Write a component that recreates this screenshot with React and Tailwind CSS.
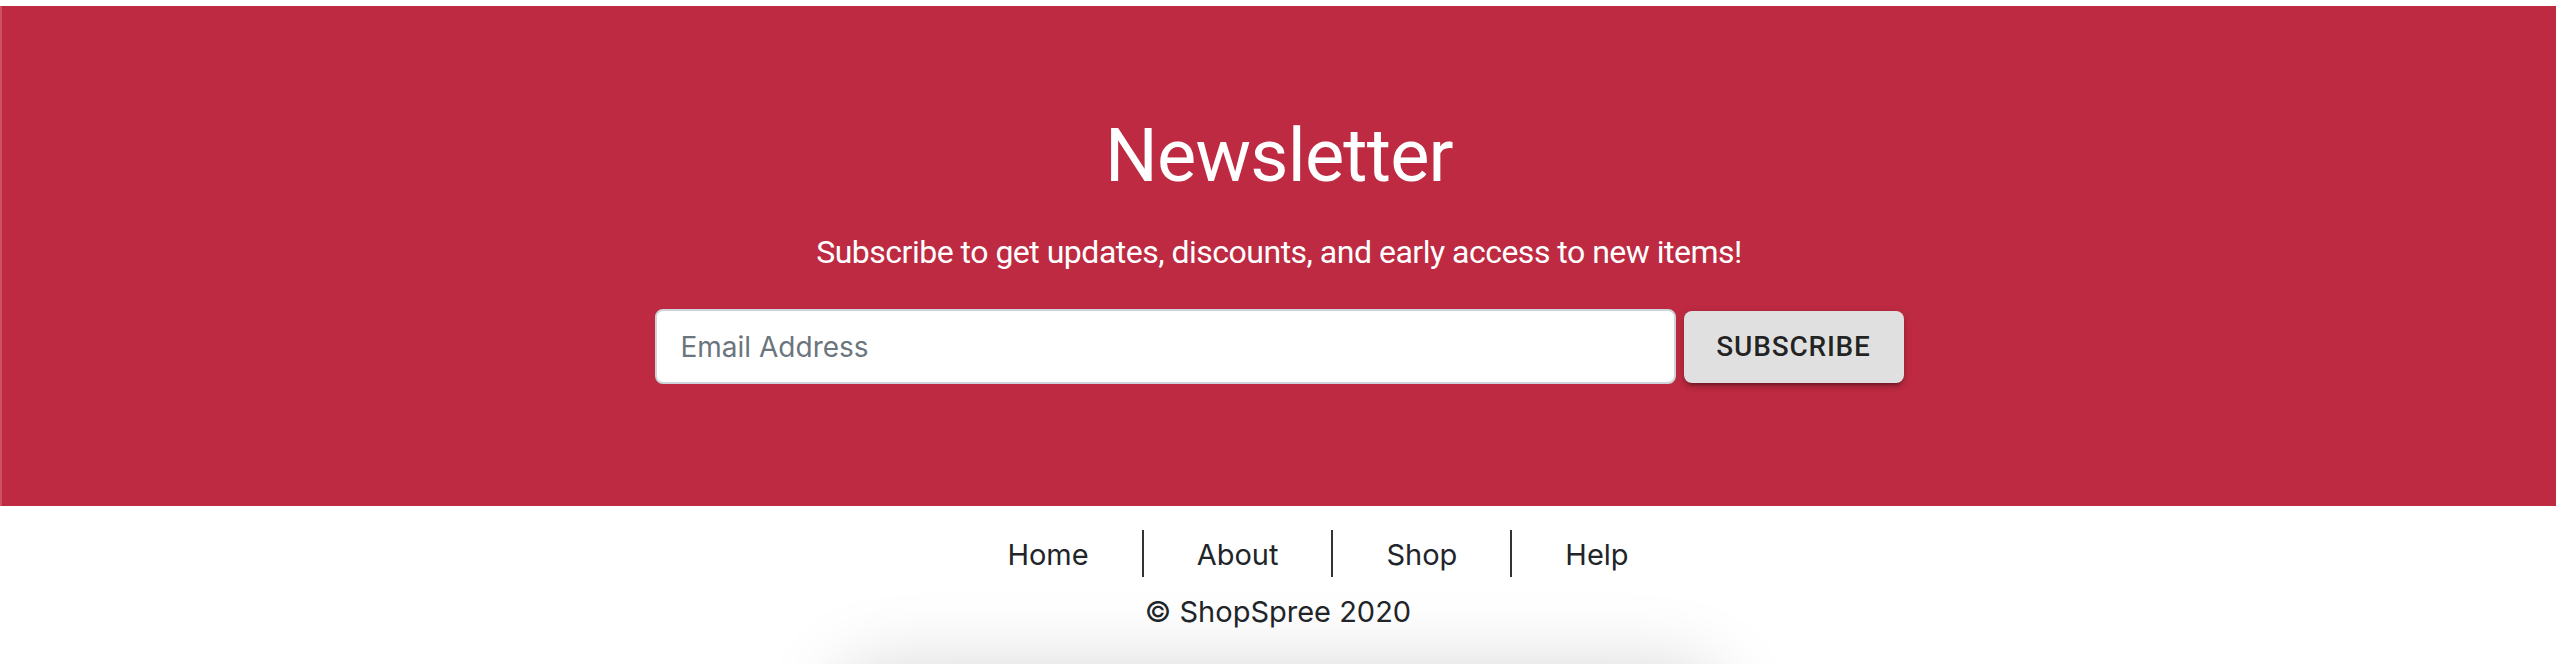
import { useState } from "react";

// Newsletter signup band with the footer nav underneath.
const links = ["Home", "About", "Shop", "Help"];

function Newsletter() {
  const [email, setEmail] = useState("");
  return (
    <section className="flex h-[500px] flex-col items-center border-l-2 border-[#cc5166] bg-[#bd2a41] font-['Roboto',sans-serif] text-white">
      <h2 className="mt-[113px] text-[74px] font-normal leading-none tracking-[-0.8px]">Newsletter</h2>
      <p className="mt-[43px] text-[32px] leading-none tracking-[-0.5px]">
        Subscribe to get updates, discounts, and early access to new items!
      </p>
      <form className="mt-[41px] flex items-center gap-2" onSubmit={(e) => e.preventDefault()}>
        <input
          type="email"
          value={email}
          onChange={(e) => setEmail(e.target.value)}
          placeholder="Email Address"
          className="h-[75px] w-[1021px] rounded-lg border-2 border-[#ced4da] bg-white px-[24px] font-['Inter',sans-serif] text-[28px] text-[#495057] outline-none placeholder:text-[#6c757d]"
        />
        <button
          type="submit"
          className="h-[72px] w-[220px] rounded-lg bg-[#e0e0e0] text-[28px] font-medium uppercase tracking-[0.8px] text-black/85 shadow-[0_6px_2px_-4px_rgba(0,0,0,0.2),0_4px_4px_0_rgba(0,0,0,0.14),0_2px_10px_0_rgba(0,0,0,0.12)]"
        >
          Subscribe
        </button>
      </form>
    </section>
  );
}

function Footer() {
  return (
    <footer className="flex flex-col items-center font-['Inter',sans-serif] text-[#212529]">
      <ul className="mt-[24px] flex justify-center pl-[80px]">
        {links.map((link, i) => (
          <li
            key={link}
            className={`h-[47px] px-[53px] pt-[2px] text-[29px] leading-[45px] ${i > 0 ? "border-l-2 border-[#333]" : ""}`}
          >
            <a href="#">{link}</a>
          </li>
        ))}
      </ul>
      <p className="mt-[20px] text-[29px] leading-[29px]">© ShopSpree 2020</p>
    </footer>
  );
}

export default function App() {
  return (
    <div className="min-h-screen overflow-hidden bg-white pt-[6px]">
      <Newsletter />
      <Footer />
      <div className="mx-auto mt-[45px] h-[200px] w-[880px] rounded-[40px] bg-white shadow-[0_0_80px_rgba(0,0,0,0.18)]" />
    </div>
  );
}
